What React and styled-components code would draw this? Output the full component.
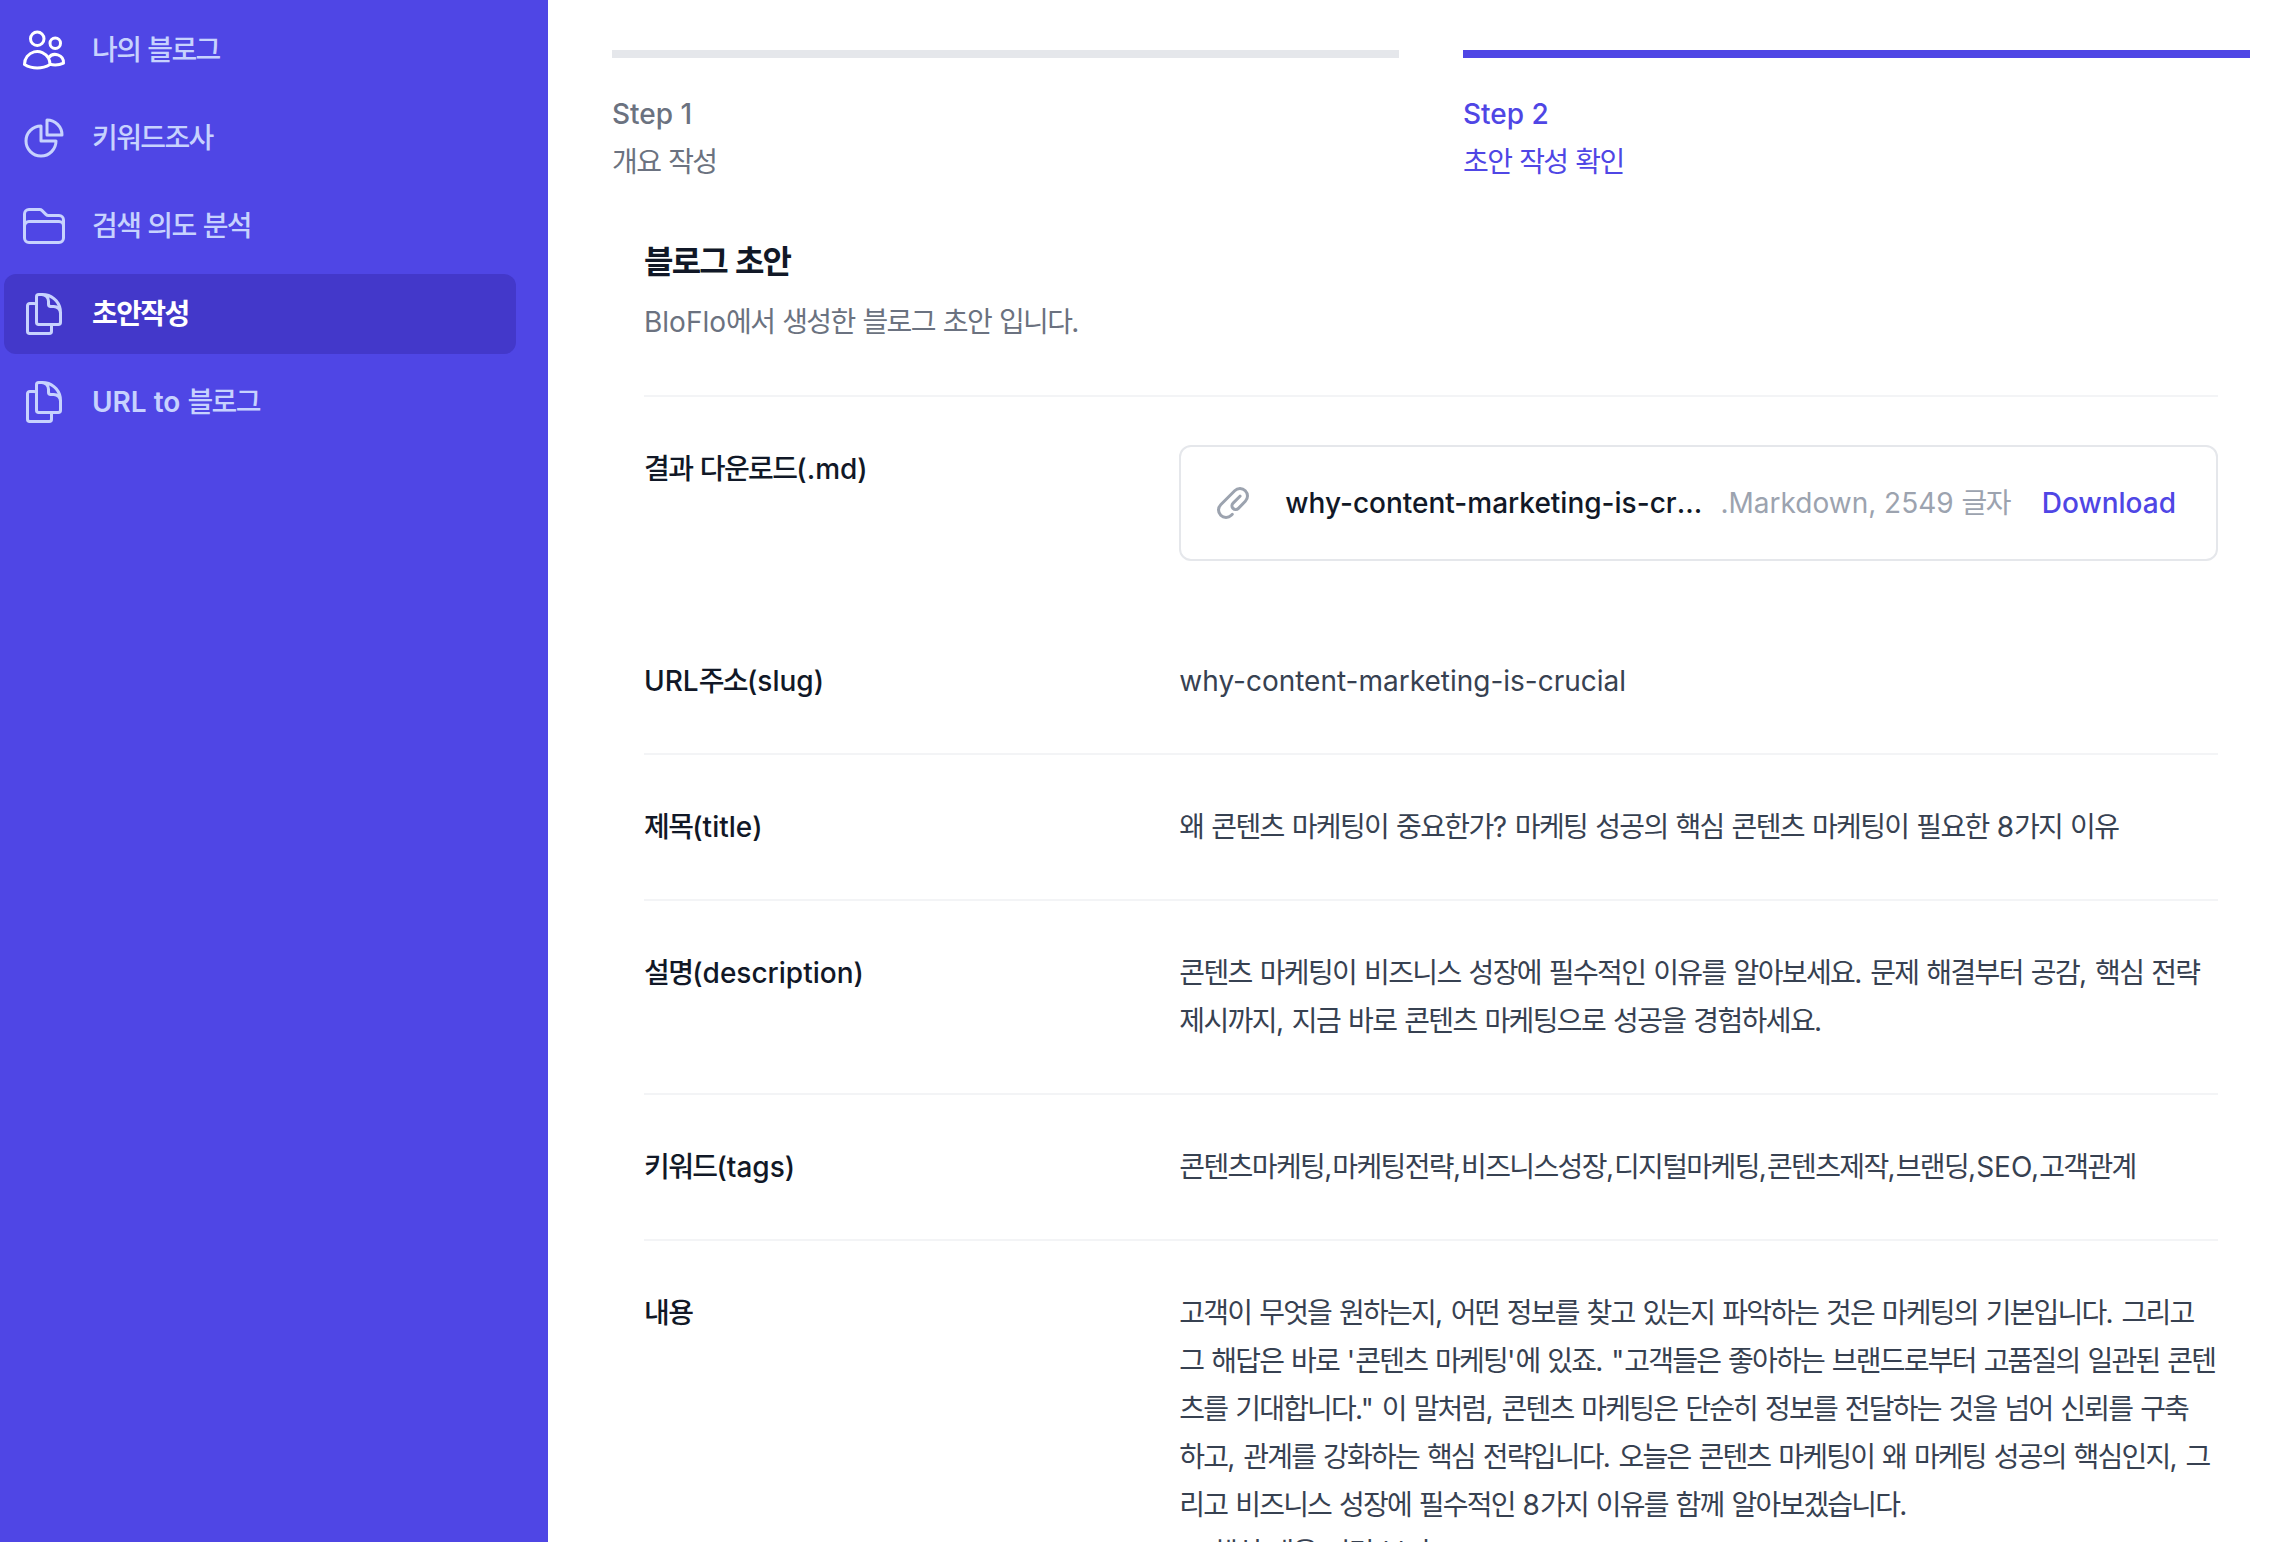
import React from 'react';
import styled, { createGlobalStyle } from 'styled-components';

const Global = createGlobalStyle`
  html, body { margin: 0; padding: 0; height: 1542px; overflow: hidden; background: #fff; }
  body { font-family: Inter, "Noto Sans CJK KR", sans-serif; font-size: 28px; line-height: 48px; }
  * { box-sizing: border-box; }
`;

const Page = styled.div`
  display: flex;
  width: 2288px;
  height: 1542px;
  overflow: hidden;
`;

const Sidebar = styled.aside`
  flex: 0 0 548px;
  background: #4f46e5;
  padding: 10px 32px 0 4px;
  display: flex;
  flex-direction: column;
  gap: 8px;
`;

const HangulRun = styled.span`
  letter-spacing: ${p => p.$tight || '-1.62px'};
`;

const NavItem = styled.a`
  display: flex;
  align-items: center;
  gap: 24px;
  height: 80px;
  padding: 16px;
  border-radius: 12px;
  font-weight: 600;
  color: ${p => (p.$active ? '#fff' : '#c7d2fe')};
  background: ${p => (p.$active ? '#4338ca' : 'transparent')};
  ${HangulRun} { font-weight: ${p => (p.$active ? 600 : 500)}; }
`;

const NavLabel = styled.span``;

const NavIcon = styled.svg`
  width: 48px;
  height: 48px;
  flex: none;
  fill: none;
  stroke: ${p => (p.$light ? '#fff' : '#c7d2fe')};
  stroke-width: 1.5;
  stroke-linecap: round;
  stroke-linejoin: round;
`;

const Main = styled.main`
  flex: 1;
  min-width: 0;
  padding: 50px 38px 0 64px;
`;

const Steps = styled.div`
  display: grid;
  grid-template-columns: 1fr 1fr;
  gap: 64px;
`;

const Step = styled.div`
  border-top: 8px solid ${p => (p.$active ? '#4f46e5' : '#e5e7eb')};
  padding-top: 32px;
  display: flex;
  flex-direction: column;
  color: ${p => (p.$active ? '#4f46e5' : '#6b7280')};
`;

const StepName = styled.span`
  font-weight: 500;
`;

const StepSub = styled.span`
  font-weight: 400;
`;

const Panel = styled.section`
  padding: 0 32px;
`;

const Head = styled.header`
  padding: 48px 0 49px;
  border-bottom: 2px solid #f3f4f6;
`;

const Title = styled.h3`
  margin: 0;
  font-size: 32px;
  line-height: 56px;
  font-weight: 600;
  color: #111827;
`;

const Sub = styled.p`
  margin: 8px 0 0;
  color: #6b7280;
`;

const Row = styled.div`
  display: grid;
  grid-template-columns: repeat(3, 1fr);
  column-gap: 32px;
  padding: 48px 0;
  border-bottom: ${p => (p.$plain ? 'none' : '2px solid #f3f4f6')};
`;

const Label = styled.div`
  font-weight: 500;
  color: #111827;
`;

const Value = styled.div`
  grid-column: span 2;
  color: #374151;
`;

const FileBox = styled.div`
  grid-column: span 2;
  display: flex;
  align-items: center;
  justify-content: space-between;
  border: 2px solid #e5e7eb;
  border-radius: 12px;
  padding: 32px 40px 32px 32px;
`;

const FileLeft = styled.div`
  flex: 1;
  min-width: 0;
  display: flex;
  align-items: center;
`;

const ClipIcon = styled.svg`
  width: 40px;
  height: 40px;
  flex: none;
  fill: #9ca3af;
`;

const FileInfo = styled.div`
  flex: 1;
  min-width: 0;
  margin-left: 32px;
  display: flex;
  gap: 16px;
`;

const FileName = styled.span`
  flex: 1;
  min-width: 0;
  overflow: hidden;
  white-space: nowrap;
  text-overflow: ellipsis;
  font-weight: 500;
  color: #111827;
`;

const FileMeta = styled.span`
  flex: none;
  color: #9ca3af;
`;

const Download = styled.a`
  flex: none;
  margin-left: 32px;
  font-weight: 500;
  color: #4f46e5;
`;

const Para = styled.p`
  margin: 0;
  white-space: pre-line;
`;

const Bullet = styled.ul`
  margin: 0;
  padding-left: 33px;
`;

// Hangul runs are set tighter than Latin text, as in the reference's system font.
const Ko = ({ children, tight }) =>
  children.split(/([가-힣]+)/).map((part, i) =>
    i % 2 ? <HangulRun key={i} $tight={tight}>{part}</HangulRun> : part
  );

const paths = {
  users: 'M15 19.128a9.38 9.38 0 002.625.372 9.337 9.337 0 004.121-.952 4.125 4.125 0 00-7.533-2.493M15 19.128v-.003c0-1.113-.285-2.16-.786-3.07M15 19.128v.106A12.318 12.318 0 018.624 21c-2.331 0-4.512-.645-6.374-1.766l-.001-.109a6.375 6.375 0 0111.964-3.07M12 6.375a3.375 3.375 0 11-6.75 0 3.375 3.375 0 016.75 0zm8.25 2.25a2.625 2.625 0 11-5.25 0 2.625 2.625 0 015.25 0z',
  pie: 'M10.5 6a7.5 7.5 0 107.5 7.5h-7.5V6zM13.5 10.5H21A7.5 7.5 0 0013.5 3v7.5z',
  folder: 'M2.25 12.75V12A2.25 2.25 0 014.5 9.75h15A2.25 2.25 0 0121.75 12v.75m-8.69-6.44l-2.12-2.12a1.5 1.5 0 00-1.061-.44H4.5A2.25 2.25 0 002.25 6v12a2.25 2.25 0 002.25 2.25h15A2.25 2.25 0 0021.75 18V9a2.25 2.25 0 00-2.25-2.25h-5.379a1.5 1.5 0 01-1.06-.44z',
  doc: 'M15.75 17.25v3.375c0 .621-.504 1.125-1.125 1.125h-9.75a1.125 1.125 0 01-1.125-1.125V7.875c0-.621.504-1.125 1.125-1.125H6.75a9.06 9.06 0 011.5.124m7.5 10.376h3.375c.621 0 1.125-.504 1.125-1.125V11.25c0-4.46-3.243-8.161-7.5-8.876a9.06 9.06 0 00-1.5-.124H9.375c-.621 0-1.125.504-1.125 1.125v3.5m7.5 10.375H9.375a1.125 1.125 0 01-1.125-1.125v-9.25m12 6.625v-1.875a3.375 3.375 0 00-3.375-3.375h-1.5a1.125 1.125 0 01-1.125-1.125v-1.5a3.375 3.375 0 00-3.375-3.375H9.75',
};

const nav = [
  { label: '나의 블로그', icon: 'users', light: true },
  { label: '키워드조사', icon: 'pie' },
  { label: '검색 의도 분석', icon: 'folder' },
  { label: '초안작성', icon: 'doc', active: true },
  { label: 'URL to 블로그', icon: 'doc' },
];

const body = `고객이 무엇을 원하는지, 어떤 정보를 찾고 있는지 파악하는 것은 마케팅의 기본입니다. 그리고 그 해답은 바로 '콘텐츠 마케팅'에 있죠. "고객들은 좋아하는 브랜드로부터 고품질의 일관된 콘텐츠를 기대합니다." 이 말처럼, 콘텐츠 마케팅은 단순히 정보를 전달하는 것을 넘어 신뢰를 구축
하고, 관계를 강화하는 핵심 전략입니다. 오늘은 콘텐츠 마케팅이 왜 마케팅 성공의 핵심인지, 그리고 비즈니스 성장에 필수적인 8가지 이유를 함께 알아보겠습니다.`;

export default function App() {
  return (
    <Page>
      <Global />
      <Sidebar>
        {nav.map(n => (
          <NavItem key={n.label} $active={n.active}>
            <NavIcon viewBox="0 0 24 24" $light={n.light}><path d={paths[n.icon]} /></NavIcon>
            <NavLabel><Ko>{n.label}</Ko></NavLabel>
          </NavItem>
        ))}
      </Sidebar>
      <Main>
        <Steps>
          <Step><StepName>Step 1</StepName><StepSub><Ko>개요 작성</Ko></StepSub></Step>
          <Step $active><StepName>Step 2</StepName><StepSub><Ko>초안 작성 확인</Ko></StepSub></Step>
        </Steps>
        <Panel>
          <Head>
            <Title><Ko tight="-1.8px">블로그 초안</Ko></Title>
            <Sub><Ko>BloFlo에서 생성한 블로그 초안 입니다.</Ko></Sub>
          </Head>
          <Row $plain>
            <Label><Ko>결과 다운로드(.md)</Ko></Label>
            <FileBox>
              <FileLeft>
                <ClipIcon viewBox="0 0 20 20"><path fillRule="evenodd" clipRule="evenodd" d="M15.621 4.379a3 3 0 00-4.242 0l-7 7a3 3 0 004.241 4.243h.001l.497-.5a.75.75 0 011.064 1.057l-.498.501-.002.002a4.5 4.5 0 01-6.364-6.364l7-7a4.5 4.5 0 016.368 6.36l-3.455 3.553A2.625 2.625 0 119.52 9.52l3.45-3.451a.75.75 0 111.061 1.06l-3.45 3.451a1.125 1.125 0 001.587 1.595l3.454-3.553a3 3 0 000-4.242z" /></ClipIcon>
                <FileInfo>
                  <FileName>why-content-marketing-is-crucial.md</FileName>
                  <FileMeta><Ko>.Markdown, 2549 글자</Ko></FileMeta>
                </FileInfo>
              </FileLeft>
              <Download>Download</Download>
            </FileBox>
          </Row>
          <Row>
            <Label><Ko>URL주소(slug)</Ko></Label>
            <Value>why-content-marketing-is-crucial</Value>
          </Row>
          <Row>
            <Label><Ko>제목(title)</Ko></Label>
            <Value><Ko>왜 콘텐츠 마케팅이 중요한가? 마케팅 성공의 핵심 콘텐츠 마케팅이 필요한 8가지 이유</Ko></Value>
          </Row>
          <Row>
            <Label><Ko>설명(description)</Ko></Label>
            <Value><Ko>콘텐츠 마케팅이 비즈니스 성장에 필수적인 이유를 알아보세요. 문제 해결부터 공감, 핵심 전략 제시까지, 지금 바로 콘텐츠 마케팅으로 성공을 경험하세요.</Ko></Value>
          </Row>
          <Row>
            <Label><Ko>키워드(tags)</Ko></Label>
            <Value><Ko>콘텐츠마케팅,마케팅전략,비즈니스성장,디지털마케팅,콘텐츠제작,브랜딩,SEO,고객관계</Ko></Value>
          </Row>
          <Row>
            <Label><Ko>내용</Ko></Label>
            <Value>
              <Para><Ko tight="-1.78px">{body}</Ko></Para>
              <Bullet><li><Ko>핵심 내용 미리 보기</Ko></li></Bullet>
            </Value>
          </Row>
        </Panel>
      </Main>
    </Page>
  );
}
